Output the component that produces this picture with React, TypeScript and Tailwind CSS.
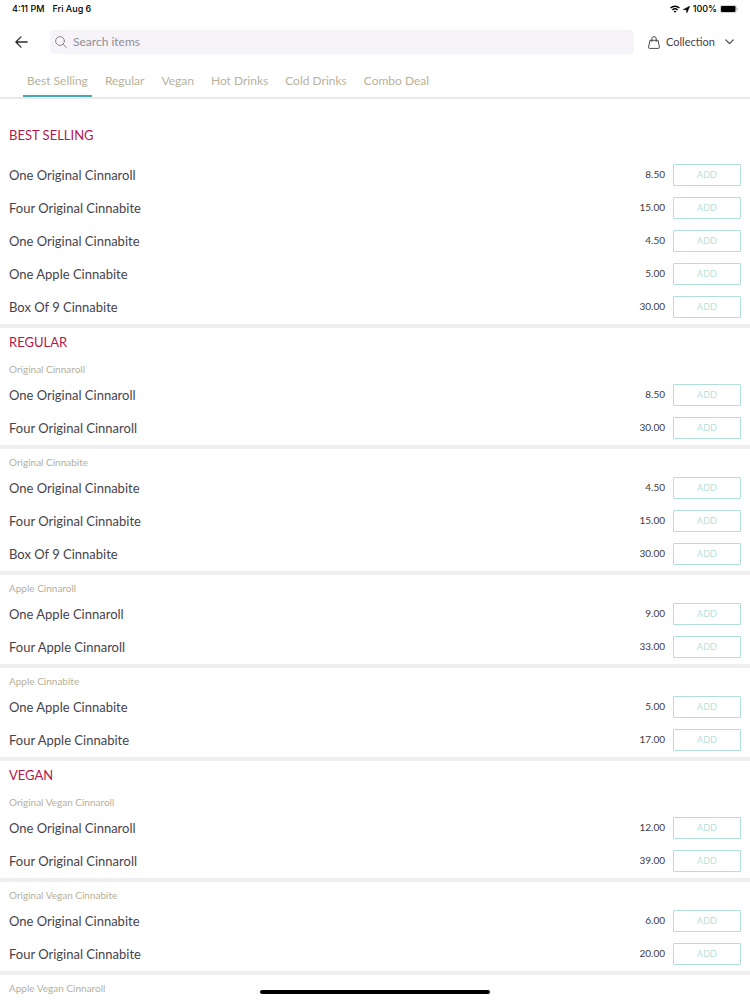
import React, { useState } from 'react';

type Item = { name: string; price: string };
type Group = { title?: string; items: Item[] };
type Section = { title: string; groups: Group[] };

const TABS = ['Best Selling', 'Regular', 'Vegan', 'Hot Drinks', 'Cold Drinks', 'Combo Deal'];

const MENU: Section[] = [
  {
    title: 'Best Selling',
    groups: [
      {
        items: [
          { name: 'One Original Cinnaroll', price: '8.50' },
          { name: 'Four Original Cinnabite', price: '15.00' },
          { name: 'One Original Cinnabite', price: '4.50' },
          { name: 'One Apple Cinnabite', price: '5.00' },
          { name: 'Box Of 9 Cinnabite', price: '30.00' },
        ],
      },
    ],
  },
  {
    title: 'Regular',
    groups: [
      {
        title: 'Original Cinnaroll',
        items: [
          { name: 'One Original Cinnaroll', price: '8.50' },
          { name: 'Four Original Cinnaroll', price: '30.00' },
        ],
      },
      {
        title: 'Original Cinnabite',
        items: [
          { name: 'One Original Cinnabite', price: '4.50' },
          { name: 'Four Original Cinnabite', price: '15.00' },
          { name: 'Box Of 9 Cinnabite', price: '30.00' },
        ],
      },
      {
        title: 'Apple Cinnaroll',
        items: [
          { name: 'One Apple Cinnaroll', price: '9.00' },
          { name: 'Four Apple Cinnaroll', price: '33.00' },
        ],
      },
      {
        title: 'Apple Cinnabite',
        items: [
          { name: 'One Apple Cinnabite', price: '5.00' },
          { name: 'Four Apple Cinnabite', price: '17.00' },
        ],
      },
    ],
  },
  {
    title: 'Vegan',
    groups: [
      {
        title: 'Original Vegan Cinnaroll',
        items: [
          { name: 'One Original Cinnaroll', price: '12.00' },
          { name: 'Four Original Cinnaroll', price: '39.00' },
        ],
      },
      {
        title: 'Original Vegan Cinnabite',
        items: [
          { name: 'One Original Cinnabite', price: '6.00' },
          { name: 'Four Original Cinnabite', price: '20.00' },
        ],
      },
      { title: 'Apple Vegan Cinnaroll', items: [] },
    ],
  },
];

function StatusBar() {
  return (
    <div className="flex h-[18px] shrink-0 items-center justify-between px-3 font-['Inter',sans-serif] text-[9px] font-medium text-black">
      <div className="flex gap-2">
        <span>4:11 PM</span>
        <span>Fri Aug 6</span>
      </div>
      <div className="flex items-center gap-[3px]">
        {/* wifi */}
        <svg className="h-2 w-[10px]" viewBox="0 0 20 16" fill="none" stroke="#000" strokeWidth="2.8">
          <path d="M1.2 6.2a12.6 12.6 0 0 1 17.6 0" />
          <path d="M4.8 9.8a7.5 7.5 0 0 1 10.4 0" />
          <path d="M10 15.6l-2.9-2.9a4.2 4.2 0 0 1 5.8 0z" fill="#000" stroke="none" />
        </svg>
        {/* location */}
        <svg className="h-[7px] w-[7px]" viewBox="0 0 14 14">
          <path d="M13.4.6L.8 7l6.2.6.8 5.8z" fill="#000" stroke="#000" strokeWidth="1.2" strokeLinejoin="round" />
        </svg>
        <span>100%</span>
        {/* battery */}
        <svg className="h-2 w-[18px]" viewBox="0 0 36 16">
          <rect x=".5" y=".5" width="32" height="15" rx="4" fill="#fff" stroke="#8a8a8a" />
          <rect x="2" y="2" width="29" height="12" rx="2.6" fill="#000" />
          <path d="M34 5.5c1.6.4 1.6 4.6 0 5z" fill="#8a8a8a" />
        </svg>
      </div>
    </div>
  );
}

function Header() {
  return (
    <header className="flex h-12 shrink-0 items-center pr-4 pl-[15px]">
      <button type="button" aria-label="Back" className="mr-[22px] shrink-0">
        <svg className="h-3 w-[13px]" viewBox="0 0 13 12" fill="none" stroke="#2f2a2e" strokeWidth="1.3" strokeLinecap="round" strokeLinejoin="round">
          <path d="M12.2 6H1M6 .9L.9 6 6 11.1" />
        </svg>
      </button>
      <label className="flex h-6 min-w-0 flex-1 items-center gap-[6px] rounded-sm bg-[#f6f4f9] pl-[5px]">
        <svg className="h-3 w-3 shrink-0" viewBox="0 0 12 12" fill="none" stroke="#8b878e" strokeWidth="1" strokeLinecap="round">
          <circle cx="5" cy="5" r="4.4" />
          <path d="M8.2 8.3l3.2 3.2" />
        </svg>
        <input
          type="text"
          aria-label="Search items"
          placeholder="Search items"
          className="min-w-0 flex-1 bg-transparent text-xs text-[#3b383d] outline-none placeholder:text-[#918d94]"
        />
      </label>
      <div className="relative ml-[14px] flex shrink-0 items-center gap-[6px]">
        <svg className="h-[13px] w-3" viewBox="0 0 12 13" fill="none" stroke="#4b474d" strokeWidth="1" strokeLinejoin="round">
          <path d="M1.9 4.3h8.2l1.3 6.9a1 1 0 0 1-1 1.2H1.6a1 1 0 0 1-1-1.2z" />
          <path d="M3.8 6V2.8a2.2 2.2 0 0 1 4.4 0V6" />
        </svg>
        <select aria-label="Order type" className="w-[68px] appearance-none bg-transparent text-[11px] text-[#454147] outline-none">
          <option>Collection</option>
          <option>Delivery</option>
        </select>
        <svg className="pointer-events-none absolute right-0 h-[6px] w-[9px]" viewBox="0 0 9 6" fill="none" stroke="#454147" strokeWidth="1.2" strokeLinecap="round" strokeLinejoin="round">
          <path d="M.8.9l3.7 3.8L8.2.9" />
        </svg>
      </div>
    </header>
  );
}

function ItemRow({ name, price }: Item) {
  return (
    <li className="flex h-[33px] items-center">
      <span className="flex-1 pt-0.5 text-[13px] text-[#47434a]">{name}</span>
      <span className="mr-2 text-[10px] text-[#3f3b41]">{price}</span>
      <button
        type="button"
        aria-label={`Add ${name}`}
        className="h-[22px] w-[68px] rounded-[1px] border border-[#b0e0d8] text-[9px] text-[#b5e2d9]"
      >
        ADD
      </button>
    </li>
  );
}

export default function App() {
  const [activeTab, setActiveTab] = useState('Best Selling');

  return (
    <div className="relative flex h-screen flex-col overflow-hidden bg-white font-['Lato',sans-serif]">
      <StatusBar />
      <Header />

      {/* Category tabs */}
      <nav className="flex h-[33px] shrink-0 gap-[9px] border-b-2 border-[#e8e8e9] pl-[23px]">
        {TABS.map((tab) => (
          <button
            key={tab}
            type="button"
            onClick={() => setActiveTab(tab)}
            className={`h-[31px] border-b-2 px-1 text-xs whitespace-nowrap text-[#b8b299] ${
              activeTab === tab ? 'border-[#47aab0]' : 'border-transparent'
            }`}
          >
            {tab}
          </button>
        ))}
      </nav>

      {/* Menu */}
      <main className="min-h-0 flex-1 overflow-hidden">
        {MENU.map((section, s) => (
          <section key={section.title}>
            <h2
              className={`px-[9px] text-[13px] leading-5 text-[#b3184a] uppercase ${
                s === 0 ? 'pt-[26px] pb-[13px]' : 'py-1'
              }`}
            >
              {section.title}
            </h2>
            {section.groups.map((group, g) => (
              <div
                key={g}
                className={`px-[9px] pb-px ${group.items.length > 0 ? 'border-b-4 border-[#efeff1]' : ''}`}
              >
                {group.title && (
                  <h3 className="pt-[5px] pb-px text-[10px] leading-4 text-[#b5b09a]">{group.title}</h3>
                )}
                <ul>
                  {group.items.map((item) => (
                    <ItemRow key={item.name} {...item} />
                  ))}
                </ul>
              </div>
            ))}
          </section>
        ))}
      </main>

      {/* Home indicator */}
      <div className="absolute bottom-[6px] left-1/2 h-1 w-[230px] -translate-x-1/2 rounded-full bg-black" />
    </div>
  );
}
